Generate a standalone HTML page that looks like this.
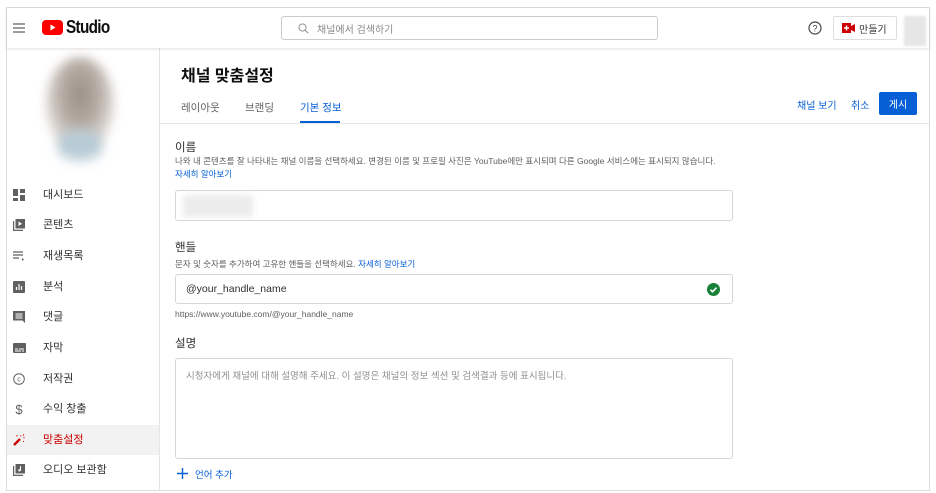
<!DOCTYPE html>
<html><head><meta charset="utf-8">
<style>
*{margin:0;padding:0;box-sizing:border-box}
body{width:936px;height:493px;background:#fff;font-family:"Liberation Sans","Noto Sans CJK KR",sans-serif;color:#0f0f0f;position:relative;overflow:hidden}
.a{position:absolute;white-space:nowrap}
.frame{position:absolute;left:6px;top:7px;width:924px;height:484px;border:1px solid #ddd}
.hdr{position:absolute;left:7px;top:8px;width:922px;height:40px;background:#fff;box-shadow:0 1px 3px rgba(0,0,0,.12);z-index:2}
.side{position:absolute;left:7px;top:48px;width:153px;height:442px;border-right:1px solid #e5e5e5}
.mi{position:absolute;left:7px;width:152px;height:30px;font-size:11px;color:#303030}
.mi span{position:absolute;left:36px;top:7px;line-height:16px}
.mi svg{position:absolute;left:6px;top:9px}
.inp{position:absolute;border:1px solid #d6d6d6;border-radius:3px;background:#fff}
.lbl{font-size:11.5px;color:#303030}
.dsc{font-size:8.5px;color:#606060}
.lnk{color:#065fd4}
</style></head><body>
<div class="frame"></div>
<div class="hdr">
  <svg class="a" style="left:6px;top:15px" width="12" height="10" viewBox="0 0 12 10"><path d="M0 1h12M0 5h12M0 9h12" stroke="#606060" stroke-width="1.3"/></svg>
  <svg class="a" style="left:35px;top:12px" width="21" height="15" viewBox="0 0 21 15"><rect width="21" height="15" rx="4" fill="#f00"/><path d="M8.5 4.5v6l5-3z" fill="#fff"/></svg>
  <div class="a" style="left:59px;top:9px;font-size:18px;font-weight:bold;letter-spacing:-0.8px;transform:scaleX(.85);transform-origin:left">Studio</div>
  <div class="a" style="left:274px;top:8px;width:377px;height:24px;border:1px solid #ccc;border-radius:3px"></div>
  <svg class="a" style="left:291px;top:15px" width="11" height="11" viewBox="0 0 11 11"><circle cx="4.5" cy="4.5" r="3.6" fill="none" stroke="#999" stroke-width="1.1"/><path d="M7.2 7.2l3 3" stroke="#999" stroke-width="1.1"/></svg>
  <div class="a" style="left:310px;top:13px;font-size:10px;color:#888">채널에서 검색하기</div>
  <svg class="a" style="left:801px;top:13px" width="14" height="14" viewBox="0 0 14 14"><circle cx="7" cy="7" r="6" fill="none" stroke="#444" stroke-width="1.2"/><text x="7" y="10.5" font-size="9" text-anchor="middle" fill="#444" font-family="Liberation Sans">?</text></svg>
  <div class="a" style="left:826px;top:8px;width:64px;height:24px;border:1px solid #ddd;border-radius:2px"></div>
  <svg class="a" style="left:835px;top:15px" width="13" height="10" viewBox="0 0 13 10"><rect width="9" height="10" fill="#c00"/><path d="M9 3l4-2v8l-4-2z" fill="#c00"/><path d="M4.5 2.5v5M2 5h5" stroke="#fff" stroke-width="1.4"/></svg>
  <div class="a" style="left:852px;top:13px;font-size:10px;color:#303030">만들기</div>
  <div class="a" style="left:897px;top:8px;width:22px;height:30px;background:#e6e6e6;filter:blur(1px)"></div>
</div>
<div class="side"></div>
<div class="a" style="left:45px;top:57px;width:70px;height:95px;border-radius:50%;background:radial-gradient(ellipse at 50% 40%,#9a8e85 0%,#b8aea6 40%,#e4e0dc 70%,#fff 100%);filter:blur(5px)"></div>
<div class="a" style="left:58px;top:130px;width:44px;height:30px;background:#b7cbd6;filter:blur(6px);border-radius:40%"></div>

<div class="mi" style="top:180px"><svg width="12" height="12" viewBox="0 0 12 12" fill="#606060"><rect x="0" y="0" width="5" height="7"/><rect x="7" y="0" width="5" height="4"/><rect x="0" y="9" width="5" height="3"/><rect x="7" y="6" width="5" height="6"/></svg><span>대시보드</span></div>
<div class="mi" style="top:210px"><svg width="12" height="12" viewBox="0 0 12 12" fill="#606060"><path d="M0 2h1.2v8.8H10V12H0z"/><rect x="2.5" y="0" width="9.5" height="9.5"/><path d="M5.5 2.5v4.5l3.5-2.2z" fill="#fff"/></svg><span>콘텐츠</span></div>
<div class="mi" style="top:241px"><svg width="12" height="12" viewBox="0 0 12 12"><path d="M0 2h10M0 5h10M0 8h6" stroke="#606060" stroke-width="1.2"/><path d="M9 8v3l2-1.5z" fill="#606060"/></svg><span>재생목록</span></div>
<div class="mi" style="top:272px"><svg width="12" height="12" viewBox="0 0 12 12"><rect width="12" height="12" rx="1" fill="#606060"/><path d="M3.5 9V6M6 9V3M8.5 9V5" stroke="#fff" stroke-width="1.2"/></svg><span>분석</span></div>
<div class="mi" style="top:302px"><svg width="12" height="12" viewBox="0 0 12 12"><path d="M0 0h12v12l-2.5-2.5H0z" fill="#606060"/><path d="M2.5 3h7M2.5 5h7M2.5 7h7" stroke="#fff" stroke-width=".9"/></svg><span>댓글</span></div>
<div class="mi" style="top:333px"><svg width="13" height="12" viewBox="0 0 13 12"><rect y="1" width="13" height="10" rx="1" fill="#606060"/><path d="M2 7h3M6 7h5M2 9h6M9 9h2" stroke="#fff" stroke-width=".9"/></svg><span>자막</span></div>
<div class="mi" style="top:364px"><svg width="12" height="12" viewBox="0 0 12 12"><circle cx="6" cy="6" r="5.3" fill="none" stroke="#606060" stroke-width="1"/><text x="6" y="8.6" font-size="7" text-anchor="middle" fill="#606060" font-family="Liberation Sans">c</text></svg><span>저작권</span></div>
<div class="mi" style="top:394px"><svg width="12" height="13" viewBox="0 0 12 13"><text x="6" y="11" font-size="13" text-anchor="middle" fill="#606060" font-family="Liberation Sans">$</text></svg><span>수익 창출</span></div>
<div class="mi" style="top:425px;background:#f2f2f2;color:#cc0000"><svg width="12" height="12" viewBox="0 0 12 12"><path d="M1 11l6-6" stroke="#cc0000" stroke-width="2.4"/><path d="M7.5 1.5l.5 1M10.5 4l1-.5M10 1.5l1-1M4 1v1.5M11 7.5h-1" stroke="#cc0000" stroke-width="1"/></svg><span>맞춤설정</span></div>
<div class="mi" style="top:455px"><svg width="12" height="12" viewBox="0 0 12 12" fill="#606060"><path d="M0 2h1.2v8.8H10V12H0z"/><rect x="2.5" y="0" width="9.5" height="9.5"/><path d="M7.5 2v4.2" stroke="#fff" stroke-width="1"/><circle cx="6.5" cy="6.3" r="1.2" fill="#fff"/></svg><span>오디오 보관함</span></div>

<div class="a" style="left:181px;top:62px;font-size:16px;font-weight:bold;color:#0f0f0f">채널 맞춤설정</div>
<div class="a" style="left:181px;top:100px;font-size:10.5px;color:#606060">레이아웃</div>
<div class="a" style="left:245px;top:100px;font-size:10.5px;color:#606060">브랜딩</div>
<div class="a" style="left:300px;top:100px;font-size:10.5px;color:#065fd4">기본 정보</div>
<div class="a" style="left:300px;top:121px;width:40px;height:2px;background:#065fd4"></div>
<div class="a" style="left:160px;top:123px;width:769px;height:1px;background:#e5e5e5"></div>
<div class="a lnk" style="left:797px;top:97px;font-size:10px">채널 보기</div>
<div class="a lnk" style="left:851px;top:97px;font-size:10px">취소</div>
<div class="a" style="left:879px;top:92px;width:38px;height:23px;background:#065fd4;border-radius:2px;color:#fff;font-size:10px;display:flex;align-items:center;justify-content:center">게시</div>

<div class="a lbl" style="left:175px;top:139px">이름</div>
<div class="a dsc" style="left:175px;top:155px">나와 내 콘텐츠를 잘 나타내는 채널 이름을 선택하세요. 변경된 이름 및 프로필 사진은 YouTube에만 표시되며 다른 Google 서비스에는 표시되지 않습니다.</div>
<div class="a dsc lnk" style="left:175px;top:168px">자세히 알아보기</div>
<div class="inp" style="left:175px;top:190px;width:558px;height:31px"></div>
<div class="a" style="left:183px;top:195px;width:70px;height:22px;background:#ececec;filter:blur(3px)"></div>

<div class="a lbl" style="left:175px;top:239px">핸들</div>
<div class="a dsc" style="left:175px;top:258px">문자 및 숫자를 추가하여 고유한 핸들을 선택하세요. <span class="lnk">자세히 알아보기</span></div>
<div class="inp" style="left:175px;top:274px;width:558px;height:30px"></div>
<div class="a" style="left:186px;top:283px;font-size:10.5px;color:#303030">@your_handle_name</div>
<svg class="a" style="left:707px;top:283px" width="13" height="13" viewBox="0 0 13 13"><circle cx="6.5" cy="6.5" r="6.5" fill="#188038"/><path d="M3.5 6.7l2 2 4-4" stroke="#fff" stroke-width="1.6" fill="none"/></svg>
<div class="a" style="left:175px;top:309px;font-size:8.5px;color:#606060">https://www.youtube.com/@your_handle_name</div>

<div class="a lbl" style="left:175px;top:335px">설명</div>
<div class="inp" style="left:175px;top:358px;width:558px;height:101px"></div>
<div class="a" style="left:186px;top:368px;font-size:9.5px;color:#909090">시청자에게 채널에 대해 설명해 주세요. 이 설명은 채널의 정보 섹션 및 검색결과 등에 표시됩니다.</div>
<svg class="a" style="left:177px;top:468px" width="11" height="11" viewBox="0 0 11 11"><path d="M5.5 0v11M0 5.5h11" stroke="#065fd4" stroke-width="1.4"/></svg>
<div class="a lnk" style="left:195px;top:467px;font-size:9.5px">언어 추가</div>
</body></html>
